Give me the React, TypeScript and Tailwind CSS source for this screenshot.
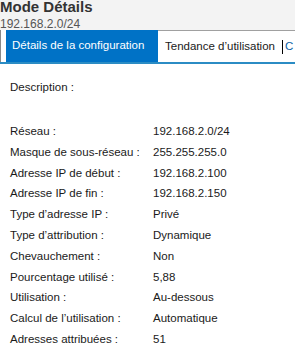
import React from 'react';

const rows: [string, string][] = [
  ['Réseau :', '192.168.2.0/24'],
  ['Masque de sous-réseau :', '255.255.255.0'],
  ['Adresse IP de début :', '192.168.2.100'],
  ['Adresse IP de fin :', '192.168.2.150'],
  ['Type d’adresse IP :', 'Privé'],
  ['Type d’attribution :', 'Dynamique'],
  ['Chevauchement :', 'Non'],
  ['Pourcentage utilisé :', '5,88'],
  ['Utilisation :', 'Au-dessous'],
  ['Calcul de l’utilisation :', 'Automatique'],
  ['Adresses attribuées :', '51'],
];

export default function App() {
  return (
    <div className="w-[295px] h-[350px] overflow-hidden bg-white font-['Liberation_Sans',sans-serif] text-[11.5px] text-[#1a1a1a]">
      {/* en-tête */}
      <div className="bg-[#f3f3f3] h-[33px]">
        <div className="-mt-[3px] text-[15px] font-bold leading-[20px] text-[#333]">Mode Détails</div>
        <div className="text-[12px] leading-[15px] text-[#555]">192.168.2.0/24</div>
      </div>

      {/* onglets */}
      <div className="flex h-[34px] bg-[#f3f3f3] border-b-[2px] border-[#2b8cc4] whitespace-nowrap">
        <div className="w-[1px] bg-[#8a8a8a]" />
        <div className="w-[5px] bg-white" />
        <div className="flex items-center bg-[#0072c6] text-white pl-[6px] w-[152px] text-[11.5px]">
          Détails de la configuration
        </div>
        <div className="flex items-center bg-white border-t border-[#a0a0a0] pl-[7px] flex-1 text-[11.5px]">
          <span>Tendance d’utilisation</span>
          <span className="ml-[7px] w-[1px] h-[14px] bg-black" />
          <span className="ml-[2px] text-[#0b5fa5]">C</span>
        </div>
      </div>

      {/* contenu */}
      <div className="px-[10px] pt-[13px]">
        <div className="h-[21px] leading-[21px]">Description :</div>
        <div className="h-[23px]" />
        {rows.map(([label, value]) => (
          <div key={label} className="flex h-[20.8px] leading-[20.8px]">
            <span className="w-[143px] shrink-0">{label}</span>
            <span>{value}</span>
          </div>
        ))}
      </div>
    </div>
  );
}
